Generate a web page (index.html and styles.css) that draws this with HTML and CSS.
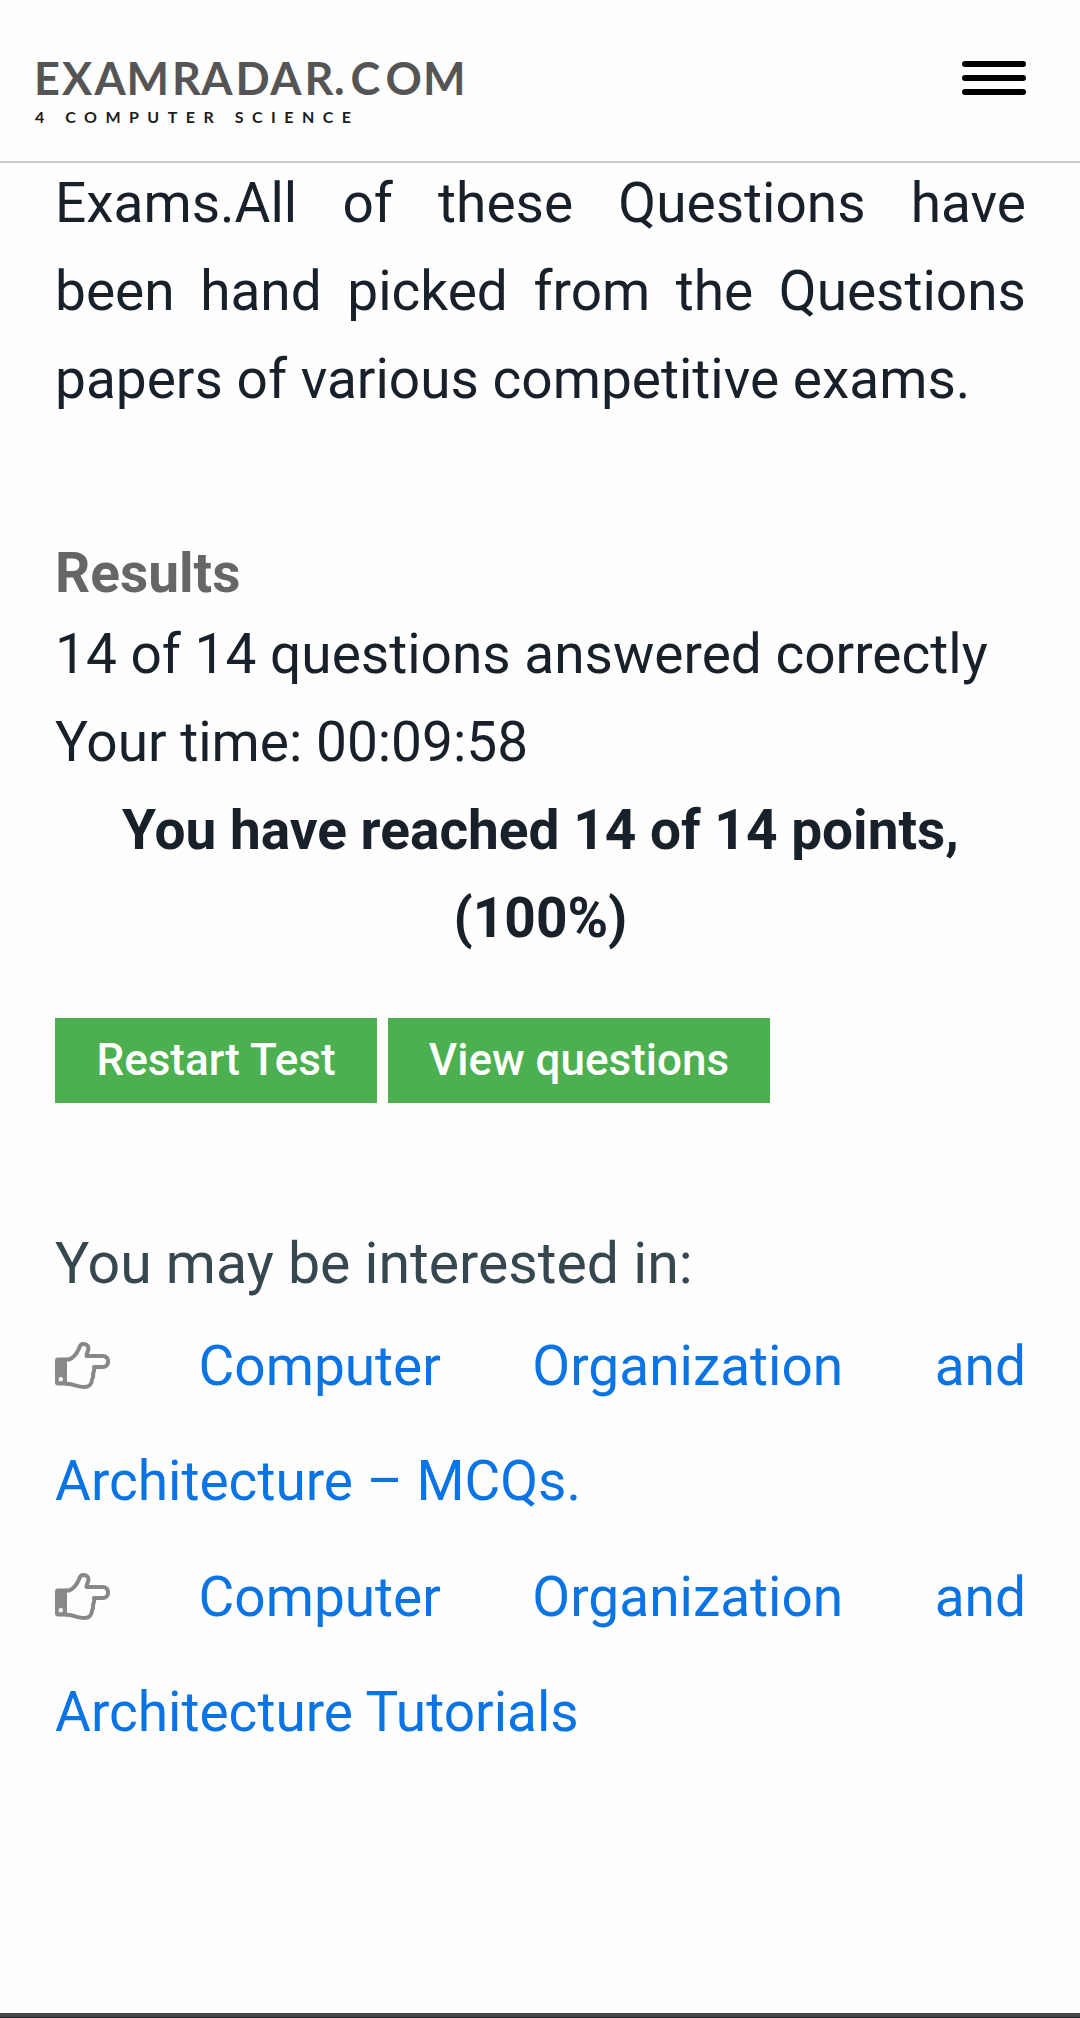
FILE: index.html
```html
<!DOCTYPE html>
<html lang="en">
<head>
<meta charset="utf-8">
<title>ExamRadar – Results</title>
<link rel="stylesheet" href="styles.css">
</head>
<body>
<header class="site-header">
  <a class="brand">
    <svg class="brand-art" width="440" height="80" viewBox="0 0 440 80" role="img">
      <text class="brand-name" x="-1 27 59.5 91.5 137 166.300 200.500 235.200 269.500 299 315.500 350.500 388" y="41.500">EXAMRADAR.COM</text>
      <text class="brand-tagline" x="0" y="69.5" textLength="316">4 COMPUTER SCIENCE</text>
    </svg>
  </a>
  <div class="menu"><span></span><span></span><span></span></div>
</header>
<main class="content">
  <p class="intro"><span class="full">Exams.All of these Questions have</span><span class="full">been hand picked from the Questions</span><span>papers of various competitive exams.</span></p>
  <section class="results">
    <h2>Results</h2>
    <p>14 of 14 questions answered correctly</p>
    <p>Your time: 00:09:58</p>
    <p class="score">You have reached 14 of 14 points,<br>(100%)</p>
    <div class="actions"><button class="restart">Restart Test</button><button class="view">View questions</button></div>
  </section>
  <section class="related">
    <h3>You may be interested in:</h3>
    <p><span class="full"><svg class="hand" viewBox="0 0 55 49"><use href="#hand"/></svg> <a>Computer Organization and</a></span><a>Architecture – MCQs.</a></p>
    <p><span class="full"><svg class="hand" viewBox="0 0 55 49"><use href="#hand"/></svg> <a>Computer Organization and</a></span><a>Architecture Tutorials</a></p>
  </section>
</main>
<footer class="bottom-edge"></footer>
<svg class="symbols">
  <symbol id="hand" viewBox="0 0 55 49">
    <path class="hand-line" d="M10 18.5H14C18.5 17 22 12 24 7.5C25 4 26 3 28 3C32 3 34.500 5.500 33 9.500C32.500 11.500 31.500 13 31.500 15H47.500C55 15 55 26 47.500 26H39C39.500 28.500 39 31 38 32.500C38.500 35 38 37 37 38.500C37 43 34 46 29 46C23 46 17 42.500 10 42.500"/>
    <path class="hand-cuff" fill-rule="evenodd" d="M3 16.500H12V44.500H3Q0 44.500 0 41.500V19.500Q0 16.500 3 16.500ZM5.800 36A2.200 2.200 0 1 0 5.800 40.400A2.200 2.200 0 1 0 5.800 36Z"/>
  </symbol>
</svg>
</body>
</html>
```
FILE: styles.css
```css
* { box-sizing: border-box; }
body { margin: 0; height: 2018px; display: flex; flex-direction: column; overflow: hidden; background: #fefefe; color: #18202a; font: 55px/88px Roboto, sans-serif; }
p, h2, h3 { margin: 0; }
.site-header { height: 163px; flex: none; display: flex; justify-content: space-between; padding: 53px 54px 0 35px; border-bottom: 2px solid #ccc; }
.brand-art { display: block; overflow: visible; }
.brand-name { font: 700 45px Lato, sans-serif; fill: #555; }
.brand-tagline { font: 700 16px Lato, sans-serif; fill: #1c1c1c; }
.menu { width: 64px; display: flex; flex-direction: column; gap: 8px; padding-top: 8px; }
.menu span { height: 6px; border-radius: 3px; background: #000; }
.content { flex: 1; padding: 0 54px 0 55px; }
.full { display: block; text-align: justify; text-align-last: justify; white-space: nowrap; }
.intro { margin-top: -4px; }
.results { padding-top: 113px; }
.results h2 { font-size: 55px; line-height: 74px; color: #666; }
.score { font-weight: 700; text-align: center; }
.actions { display: flex; gap: 11px; padding-top: 56px; }
button { height: 85px; border: 0; padding: 0; background: #4caf50; color: #fff; font: 500 44px/85px Roboto, sans-serif; }
.restart { width: 322px; }
.view { width: 382px; }
.related { padding-top: 121px; line-height: 115.4px; }
.related h3 { padding-bottom: 5px; font-weight: 400; font-size: 57.2px; line-height: 80px; color: #37474f; }
.related a { color: #0b74e5; }
.hand { width: 55px; height: 49px; margin-right: -3px; vertical-align: -5px; }
.hand-line { fill: none; stroke: #888; stroke-width: 4; stroke-linejoin: round; }
.hand-cuff { fill: #888; }
.bottom-edge { height: 5px; flex: none; background: #43474a; border-bottom: 1px solid #1d1f22; }
.symbols { display: none; }
```
